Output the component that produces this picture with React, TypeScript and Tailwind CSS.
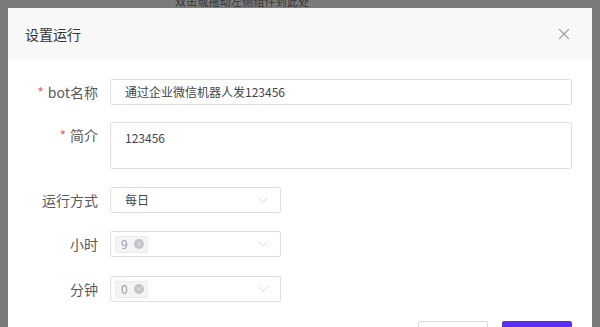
import { ChevronDown } from "lucide-react";

const font = { fontFamily: '"Noto Sans CJK SC", "Noto Sans", sans-serif' };

function Label({ text, required }: { text: string; required?: boolean }) {
  return (
    <div className="flex h-[26px] w-[90px] shrink-0 items-center justify-end text-[14px] text-[#5a5a5a]">
      {required && <span className="mr-[4px] text-[#e8686a]">*</span>}
      {text}
    </div>
  );
}

function Tag({ value }: { value: string }) {
  return (
    <span className="flex h-[17px] items-center gap-[6px] rounded-[2px] border border-[#ececee] bg-[#f4f4f5] pl-[5px] pr-[3px] text-[12px] leading-none text-[#9a9a9a]">
      {value}
      <span className="flex size-[10px] items-center justify-center rounded-full bg-[#c4c4c8]">
        <svg viewBox="0 0 10 10" className="size-[6px]">
          <path d="M2 2l6 6M8 2l-6 6" stroke="#e8e8ea" strokeWidth="1.4" />
        </svg>
      </span>
    </span>
  );
}

function Select({ children, tag }: { children: React.ReactNode; tag?: boolean }) {
  return (
    <div
      className={`flex h-[26px] w-[171px] items-center justify-between rounded-[2px] border border-[#dfdfdf] bg-white pr-[8px] text-[12px] text-[#444] ${
        tag ? "pl-[4px]" : "pl-[14px]"
      }`}
    >
      {children}
      <ChevronDown size={18} strokeWidth={0.9} className="text-[#c4c4c4]" />
    </div>
  );
}

export default function App() {
  return (
    <div
      className="relative h-[327px] w-[600px] overflow-hidden bg-[#7b7b7b] px-[8px] pt-[8px]"
      style={font}
    >
      <div className="absolute left-[175px] top-[-6px] text-[11px] leading-[14px] tracking-[0.2px] text-[#333]">
        双击或拖动左侧组件到此处
      </div>

      <div className="relative h-full w-[584px] bg-white">
        <div className="flex h-[52px] items-center justify-between bg-[#f8f8f8] pl-[17px] pr-[22px]">
          <span className="text-[14px] text-[#333]">设置运行</span>
          <svg viewBox="0 0 12 12" className="size-[12px]">
            <path d="M1 1l10 10M11 1L1 11" stroke="#a0a0a0" strokeWidth="1.1" />
          </svg>
        </div>

        <div className="flex flex-col pt-[19px]">
          <div className="flex items-start gap-[12px]">
            <Label text="bot名称" required />
            <div className="flex h-[26px] w-[462px] items-center rounded-[2px] border border-[#dfdfdf] pl-[14px] text-[12px] text-[#444]">
              通过企业微信机器人发123456
            </div>
          </div>

          <div className="mt-[17px] flex items-start gap-[12px]">
            <Label text="简介" required />
            <div className="h-[47px] w-[462px] rounded-[2px] border border-[#dfdfdf] pl-[14px] pt-[6px] text-[12px] leading-[18px] text-[#444]">
              123456
            </div>
          </div>

          <div className="mt-[18px] flex items-start gap-[12px]">
            <Label text="运行方式" />
            <Select>每日</Select>
          </div>

          <div className="mt-[18px] flex items-start gap-[12px]">
            <Label text="小时" />
            <Select tag>
              <Tag value="9" />
            </Select>
          </div>

          <div className="mt-[19px] flex items-start gap-[12px]">
            <Label text="分钟" />
            <Select tag>
              <Tag value="0" />
            </Select>
          </div>

          <div className="mt-[19px] flex justify-end gap-[14px] pr-[20px]">
            <button className="h-[30px] w-[70px] rounded-[2px] border border-[#dcdcdc] bg-white text-[12px] text-[#555]">
              取消
            </button>
            <button className="h-[30px] w-[70px] rounded-[2px] bg-[#5a2ff4] text-[12px] text-white">
              确定
            </button>
          </div>
        </div>
      </div>
    </div>
  );
}
